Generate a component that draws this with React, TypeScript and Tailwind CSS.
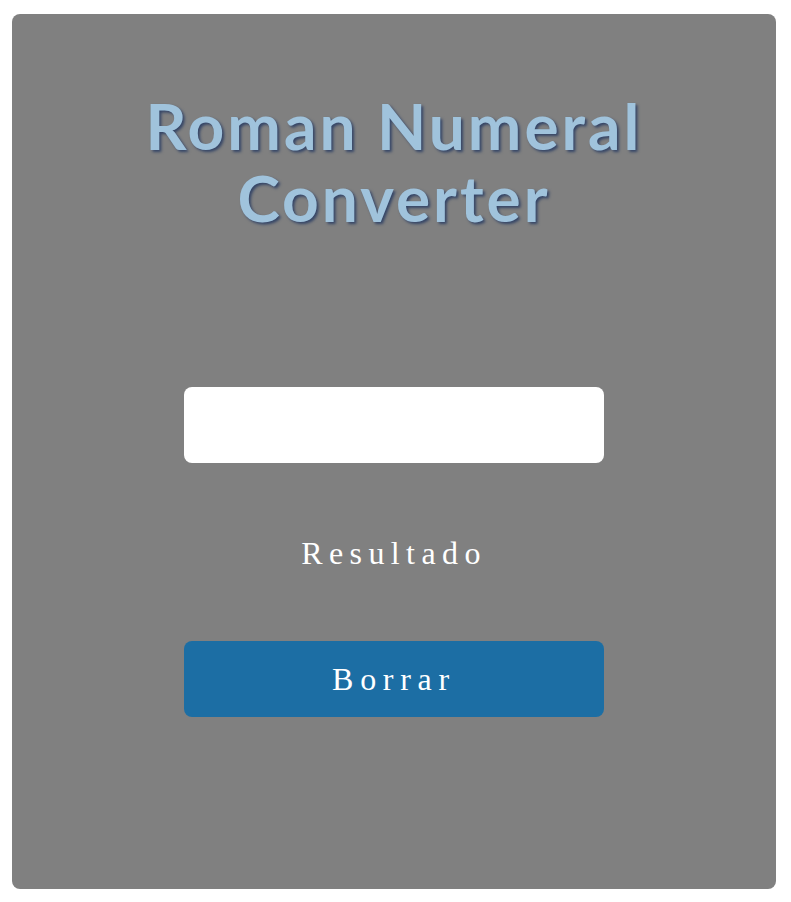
export default function App() {
  return (
    <div className="min-h-screen bg-white pt-[14px] pl-[12px]">
      <div className="w-[764px] h-[875px] rounded-[8px] bg-[#808080] flex flex-col items-center">
        <h1
          className="mt-[76px] text-center font-bold text-[64px] leading-[72px] tracking-[3px] text-[#a0c3dc] [text-shadow:2px_2px_3px_#334466]"
          style={{ fontFamily: '"Lato", "Open Sans", sans-serif' }}
        >
          Roman Numeral
          <br />
          Converter
        </h1>
        <input
          type="text"
          className="mt-[153px] w-[420px] h-[76px] rounded-[8px] bg-white outline-none border-0"
        />
        <p
          className="mt-[70px] text-white text-[32px] leading-[40px] tracking-[0.2em]"
          style={{ fontFamily: '"Liberation Serif", "Times New Roman", serif' }}
        >
          Resultado
        </p>
        <button
          className="mt-[68px] w-[420px] h-[76px] rounded-[8px] bg-[#1c6ea4] text-white text-[32px] tracking-[0.21em]"
          style={{ fontFamily: '"Liberation Serif", "Times New Roman", serif' }}
        >
          Borrar
        </button>
      </div>
    </div>
  );
}
